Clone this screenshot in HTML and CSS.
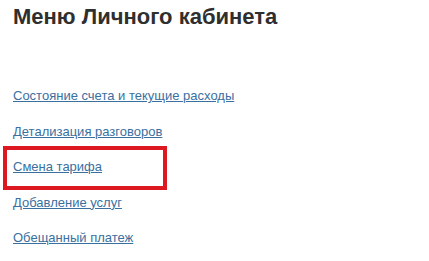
FILE: index.html
```html
<!DOCTYPE html>
<html lang="ru">
<head>
<meta charset="utf-8">
<link rel="stylesheet" href="styles.css">
</head>
<body>
<div class="page">
  <h1 class="title">Меню Личного кабинета</h1>
  <ul class="menu">
    <li class="item"><a href="#">Состояние счета и текущие расходы</a></li>
    <li class="item"><a href="#">Детализация разговоров</a></li>
    <li class="item item-marked"><a href="#">Смена тарифа</a></li>
    <li class="item"><a href="#">Добавление услуг</a></li>
    <li class="item"><a href="#">Обещанный платеж</a></li>
  </ul>
</div>
</body>
</html>
```
FILE: styles.css
```css
html, body {
  margin: 0;
  padding: 0;
  background: #ffffff;
}
.page {
  padding: 0 0 0 13px;
  font-family: "Liberation Sans", Arial, sans-serif;
}
.title {
  margin: 0;
  padding-top: 5px;
  font-size: 22px;
  line-height: 24px;
  font-weight: bold;
  color: #2f2f2f;
}
.menu {
  list-style: none;
  margin: 59px 0 0 0;
  padding: 0;
}
.item {
  font-size: 13px;
  line-height: 16px;
  margin-bottom: 19.5px;
  position: relative;
}
.item a {
  color: #3a70a0;
  text-decoration: underline;
}
.item-marked::before {
  content: "";
  position: absolute;
  left: -10px;
  top: -13px;
  width: 156px;
  height: 36px;
  border: 4px solid #dd1820;
}
```
